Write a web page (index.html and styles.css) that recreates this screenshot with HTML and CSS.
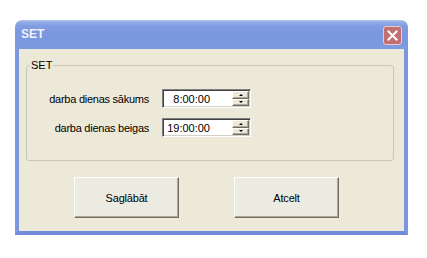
FILE: index.html
```html
<!doctype html>

<html>

<head>
    <meta charset="utf-8">
    <link rel="stylesheet" href="styles.css">
</head>

<body>

<div class="window">
    <div class="titlebar">
        <span class="title">SET</span>
        <span class="close">
            <svg width="19" height="19" viewBox="0 0 19 19">
                <rect x="0.5" y="0.5" width="18" height="18" rx="2.5" fill="#c26f71" stroke="#e9c9cf"/>
                <path d="M5.5 5.5 L13.5 13.5 M13.5 5.5 L5.5 13.5" stroke="#fff" stroke-width="2" stroke-linecap="square"/>
            </svg>
        </span>
    </div>
    <div class="client">
        <fieldset class="group">
            <legend>SET</legend>
            <div class="fields">
                <label>darba dienas sākums</label>
                <div class="picker">
                    <span class="value">8:00:00</span>
                    <span class="spin">
                        <span class="spin-btn"><span class="arrow-up"></span></span>
                        <span class="spin-btn"><span class="arrow-down"></span></span>
                    </span>
                </div>
                <label>darba dienas beigas</label>
                <div class="picker">
                    <span class="value">19:00:00</span>
                    <span class="spin">
                        <span class="spin-btn"><span class="arrow-up"></span></span>
                        <span class="spin-btn"><span class="arrow-down"></span></span>
                    </span>
                </div>
            </div>
        </fieldset>
        <div class="buttons">
            <button class="btn">Saglābāt</button>
            <button class="btn">Atcelt</button>
        </div>
    </div>
</div>

</body>

</html>
```

FILE: styles.css
```css
html,
body {
    padding: 0;
    margin: 0;
    background: #fff;
}

body {
    padding: 20px 0 0 15px;
    font-family: "Liberation Sans", Arial, sans-serif;
    font-size: 11px;
    color: #000;
}

.window {
    width: 393px;
}

.titlebar {
    display: flex;
    justify-content: space-between;
    align-items: flex-start;
    height: 29px;
    border-radius: 7px 7px 0 0;
    background: linear-gradient(#b2c7f0 0, #93afe8 2px, #809de2 6px, #7a97df 50%, #7d9be1 100%);
}

.title {
    padding-left: 6px;
    line-height: 29px;
    font-size: 12px;
    font-weight: bold;
    color: #eef2fc;
}

.close {
    margin: 6px 6px 0 0;
    width: 19px;
    height: 19px;
}

.client {
    padding: 10px 0 13px 0;
    background: #ece9d8;
    border: 4px solid #7a97df;
    border-top: 0;
    border-bottom-color: #6f8bd9;
}

.group {
    margin: 0 10px 0 7px;
    padding: 0 0 23px 0;
    border: 1px solid #c8c8b8;
    border-radius: 3px;
}

.group legend {
    margin-left: 3px;
    padding: 0 1px;
    line-height: 12px;
}

.fields {
    display: grid;
    grid-template-columns: 122px auto;
    column-gap: 13px;
    row-gap: 10px;
    padding-top: 18px;
    align-items: center;
}

.fields label {
    text-align: right;
    letter-spacing: -0.25px;
}

.picker {
    display: flex;
    width: 85px;
    height: 15px;
    background: #fff;
    border: 1px solid;
    border-color: #808080 #fff #fff #808080;
    box-shadow: inset 1px 1px #404040, inset -1px -1px #d4d0c8;
    padding: 1px;
    justify-self: start;
}

.value {
    flex: 1;
    text-align: right;
    padding-right: 22px;
    line-height: 16px;
}

.spin {
    display: flex;
    flex-direction: column;
    width: 17px;
}

.spin-btn {
    flex: 1;
    display: flex;
    align-items: center;
    justify-content: center;
    background: #ece9d8;
    border: 1px solid;
    border-color: #fff #716f64 #716f64 #fff;
    box-shadow: inset -1px -1px #aca899;
}

.arrow-up {
    border: 2px solid transparent;
    border-top: 0;
    border-bottom: 2px solid #000;
}

.arrow-down {
    border: 2px solid transparent;
    border-bottom: 0;
    border-top: 2px solid #000;
}

.buttons {
    display: flex;
    gap: 55px;
    padding: 16px 0 0 55px;
}

.btn {
    width: 105px;
    height: 41px;
    padding: 0;
    font-family: "Liberation Sans", Arial, sans-serif;
    font-size: 11px;
    letter-spacing: -0.2px;
    color: #000;
    background: #ecebe2;
    border: 1px solid;
    border-color: #fff #716f64 #716f64 #fff;
    box-shadow: inset -1px -1px #aca899;
}
```
